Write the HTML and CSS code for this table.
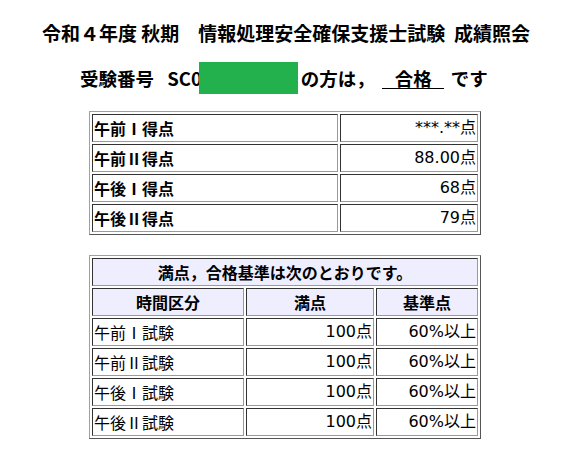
FILE: index.html
```html
<!DOCTYPE html>
<html lang="ja">
<head>
<meta charset="utf-8">
<title>成績照会</title>
<link rel="stylesheet" href="styles.css">
</head>
<body>
<h1 class="title">令和４年度 秋期　情報処理安全確保支援士試験&nbsp; 成績照会</h1>
<p class="result">受験番号 <span class="examno">SC0</span><span class="mask"></span>の方は，<span class="pass">合格</span>です</p>

<table class="grid scores">
  <tr><th class="label">午前Ⅰ得点</th><td class="num">***.**点</td></tr>
  <tr><th class="label">午前Ⅱ得点</th><td class="num">88.00点</td></tr>
  <tr><th class="label">午後Ⅰ得点</th><td class="num">68点</td></tr>
  <tr><th class="label">午後Ⅱ得点</th><td class="num">79点</td></tr>
</table>

<table class="grid criteria">
  <tr><th class="head" colspan="3">満点，合格基準は次のとおりです。</th></tr>
  <tr><th class="head c1">時間区分</th><th class="head c2">満点</th><th class="head c3">基準点</th></tr>
  <tr><td>午前Ⅰ試験</td><td class="num">100点</td><td class="num">60%以上</td></tr>
  <tr><td>午前Ⅱ試験</td><td class="num">100点</td><td class="num">60%以上</td></tr>
  <tr><td>午後Ⅰ試験</td><td class="num">100点</td><td class="num">60%以上</td></tr>
  <tr><td>午後Ⅱ試験</td><td class="num">100点</td><td class="num">60%以上</td></tr>
</table>
</body>
</html>
```

FILE: styles.css
```css
html, body {
  margin: 0;
  padding: 0;
  background: #ffffff;
  color: #000000;
  font-family: "Noto Sans CJK JP", "Noto Sans", sans-serif;
}

.title {
  margin: 21px 0 0 0;
  padding-left: 42px;
  font-size: 19px;
  line-height: 24px;
  font-weight: bold;
  white-space: nowrap;
}

.result {
  margin: 21px 0 0 0;
  padding-left: 80px;
  font-size: 18.5px;
  line-height: 24px;
  font-weight: bold;
  white-space: nowrap;
}

.examno {
  margin-left: 9px;
}

.mask {
  display: inline-block;
  width: 99px;
  height: 32px;
  margin: -7px 3px -8px -3px;
  background: #22b14c;
  position: relative;
}

.pass {
  display: inline-block;
  margin: 0 7px 0 7px;
  padding: 0 12px 0 13px;
  line-height: 20px;
  border-bottom: 1.5px solid #000;
}

.grid {
  border-collapse: separate;
  border-spacing: 2px;
  border-width: 1px;
  border-style: solid;
  border-color: #a0a0a0 #555555 #555555 #a0a0a0;
  width: 392px;
  margin-left: 89px;
  font-size: 16px;
  line-height: 24px;
}

.grid th,
.grid td {
  padding: 1px;
  border-width: 1px;
  border-style: solid;
  border-color: #333333 #9a9a9a #9a9a9a #333333;
  white-space: nowrap;
}

.scores {
  margin-top: 21px;
}

.scores .label {
  width: 242px;
  text-align: left;
  font-weight: bold;
}

.num {
  text-align: right;
  font-family: "DejaVu Sans", "Noto Sans CJK JP", sans-serif;
}

.criteria {
  margin-top: 20px;
}

.criteria td {
  text-align: left;
}

.criteria td.num {
  text-align: right;
}

.head {
  background: #eeeeff;
  font-weight: bold;
  text-align: center;
}

.c1 { width: 148px; }
.c2 { width: 124px; }
.c3 { width: 98px; }
```
